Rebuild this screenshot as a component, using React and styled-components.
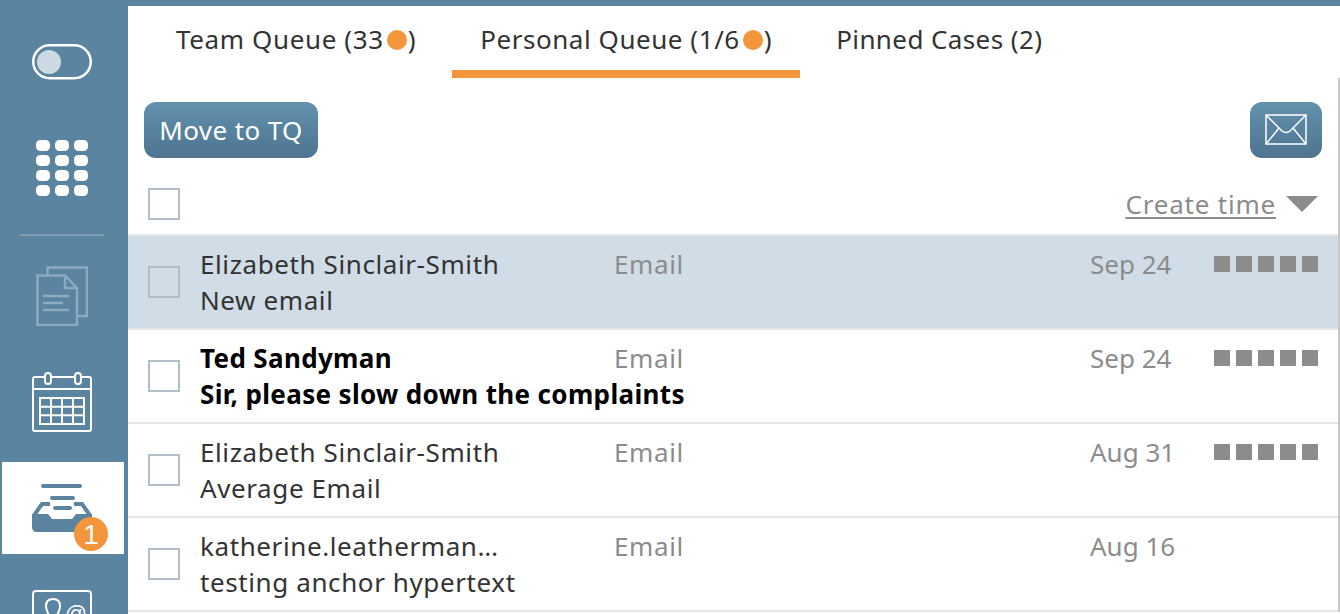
import React from 'react';
import styled, { createGlobalStyle } from 'styled-components';

const GlobalStyle = createGlobalStyle`
  html, body {
    margin: 0;
    height: 100%;
    overflow: hidden;
    background: #fff;
  }
  body {
    font-family: "Noto Sans", "Open Sans", sans-serif;
    font-variant-ligatures: none;
  }
`;

const Page = styled.div`
  display: flex;
  flex-direction: column;
  height: 614px;
  overflow: hidden;
`;

const TopBar = styled.div`
  height: 6px;
  flex: none;
  background: #5a84a0;
`;

const Body = styled.div`
  display: flex;
  flex: 1;
  min-height: 0;
`;

const Sidebar = styled.nav`
  width: 128px;
  flex: none;
  background: #5a84a0;
  padding-top: 10px;
  display: flex;
  flex-direction: column;
  gap: 14px;
  overflow: hidden;
`;

const NavItem = styled.div`
  flex: none;
  height: 92px;
  margin: 0 4px 0 2px;
  padding-right: 2px;
  box-sizing: border-box;
  display: flex;
  align-items: center;
  justify-content: center;
  position: relative;
  background: ${(p) => (p.$active ? '#fff' : 'transparent')};
`;

const NavDivider = styled.div`
  flex: none;
  height: 2px;
  margin: 6px 24px 0 20px;
  background: #7c9fb6;
`;

const Badge = styled.span`
  position: absolute;
  left: 72px;
  top: 55px;
  width: 34px;
  height: 34px;
  border-radius: 50%;
  background: #f3953a;
  color: #fff;
  font-family: "Liberation Sans", sans-serif;
  font-size: 28px;
  line-height: 35px;
  text-align: center;
`;

const Main = styled.main`
  flex: 1;
  min-width: 0;
`;

const Tabs = styled.div`
  display: flex;
  gap: 8px;
  padding-left: 20px;
  height: 72px;
`;

const Tab = styled.div`
  display: flex;
  align-items: center;
  padding: 6px 28px 4px;
  height: 72px;
  box-sizing: border-box;
  font-size: 26px;
  letter-spacing: ${(p) => p.$spacing};
  color: #333;
  white-space: nowrap;
  border-bottom: 8px solid ${(p) => (p.$active ? '#f3953a' : 'transparent')};
`;

const Dot = styled.span`
  display: inline-block;
  width: 20px;
  height: 20px;
  margin: 2px 1px 0 3px;
  border-radius: 50%;
  background: #f3953a;
`;

const QueuePanel = styled.div`
  border-right: 2px solid #c8c8c8;
`;

const Toolbar = styled.div`
  display: flex;
  justify-content: space-between;
  padding: 24px 16px 0;
`;

const ActionButton = styled.button`
  height: 56px;
  width: ${(p) => (p.$icon ? '72px' : '174px')};
  padding: 0;
  border: 0;
  border-radius: 12px;
  background: linear-gradient(#6291ae, #4e7490);
  color: #fff;
  font: inherit;
  font-size: 26px;
  letter-spacing: 0.4px;
  display: flex;
  align-items: center;
  justify-content: center;
`;

const ListHeader = styled.div`
  display: flex;
  justify-content: space-between;
  height: 46px;
  margin-top: 30px;
  padding: 0 20px;
  border-bottom: 2px solid #e6e6e6;
`;

const Checkbox = styled.span`
  display: block;
  flex: none;
  width: 32px;
  height: 32px;
  box-sizing: border-box;
  border: 2px solid #b0bec5;
`;

const Sort = styled.div`
  display: flex;
  align-items: center;
  gap: 10px;
  height: 32px;
`;

const SortLabel = styled.span`
  font-size: 26px;
  letter-spacing: 0.8px;
  color: #8c8c8c;
  text-decoration: underline;
  text-underline-offset: 3px;
  text-decoration-thickness: 2px;
`;

const SortArrow = styled.span`
  width: 0;
  height: 0;
  border-left: 16px solid transparent;
  border-right: 16px solid transparent;
  border-top: 16px solid #8c8c8c;
`;

const Row = styled.div`
  display: grid;
  grid-template-columns: 32px 434px 476px 124px 104px;
  height: 92px;
  padding-left: 20px;
  border-bottom: 2px solid #e6e6e6;
  background: ${(p) => (p.$selected ? '#d0dde6' : '#fff')};
`;

const CheckCell = styled.div`
  padding-top: 30px;
`;

const NameCell = styled.div`
  padding: 10px 0 0 20px;
  font-size: 26px;
  line-height: 36px;
  letter-spacing: ${(p) => (p.$unread ? '0.35px' : '0.6px')};
  color: ${(p) => (p.$unread ? '#000' : '#333')};
  font-weight: ${(p) => (p.$unread ? 700 : 400)};
  white-space: nowrap;
`;

const GrayCell = styled.div`
  padding-top: 10px;
  font-size: 26px;
  line-height: 36px;
  letter-spacing: ${(p) => p.$spacing || 0};
  color: #8c8c8c;
`;

const Squares = styled.div`
  display: flex;
  gap: 6px;
  padding-top: 20px;
`;

const Square = styled.span`
  width: 16px;
  height: 16px;
  background: #8c8c8c;
`;

const ToggleIcon = () => (
  <svg width="60" height="36" viewBox="0 0 60 36">
    <rect x="1.25" y="1.25" width="57.5" height="33" rx="16.5" fill="none" stroke="#fff" strokeWidth="2.5" />
    <circle cx="17" cy="18" r="12" fill="#ccd9e2" />
  </svg>
);

const GridIcon = () => (
  <svg width="52" height="56" viewBox="0 0 52 56" fill="#fff">
    {[0, 15, 30, 45].map((y) =>
      [0, 19, 38].map((x) => <rect key={`${x}-${y}`} x={x} y={y} width="14" height="11" rx="4.5" />)
    )}
  </svg>
);

const DocsIcon = () => (
  <svg width="52" height="60" viewBox="0 0 52 60" fill="none" stroke="#8dabbf" strokeWidth="2.5">
    <path d="M11.5 9V1.5H51V50H42" />
    <path d="M1.5 9.5H29L41 22V59H1.5z" />
    <path d="M29 10V22H41" />
    <path d="M7 30H33M7 37H27M7 44H33" />
  </svg>
);

const CalendarIcon = () => (
  <svg width="60" height="60" viewBox="0 0 60 60" fill="none" stroke="#fff" strokeWidth="2">
    <rect x="1" y="5" width="58" height="54" rx="2" />
    <path d="M1 17H59" />
    <rect x="13" y="1" width="6" height="11" rx="3" fill="#5a84a0" />
    <rect x="43" y="1" width="6" height="11" rx="3" fill="#5a84a0" />
    <rect x="8" y="26" width="44" height="26" />
    <path d="M19 26V52M30 26V52M41 26V52M8 34.7H52M8 43.3H52" />
  </svg>
);

const InboxIcon = () => (
  <svg width="60" height="50" viewBox="0 0 60 50" fill="#5a84a0">
    <rect x="9" y="1" width="41" height="4" rx="2" />
    <rect x="18" y="13" width="25" height="4" rx="2" />
    <rect x="21" y="23" width="19" height="4" rx="2" />
    <path d="M18 21H10L1.500 33" fill="none" stroke="#5a84a0" strokeWidth="4" />
    <path d="M42 21H50L58.500 33" fill="none" stroke="#5a84a0" strokeWidth="4" />
    <path d="M0 31H16L20 36H40L44 31H60V44Q60 49 55 49H5Q0 49 0 44z" />
  </svg>
);

const ContactIcon = () => (
  <svg width="60" height="48" viewBox="0 0 60 48" fill="none" stroke="#fff" strokeWidth="2">
    <rect x="1" y="1" width="58" height="46" rx="3" />
    <path d="M17 28C17 23 14 21 14 16C14 11 17 9 21 9C25 9 28 11 28 16C28 21 25 23 25 28" />
    <text x="44" y="31" textAnchor="middle" fill="#fff" stroke="none" fontFamily="Liberation Sans, sans-serif" fontSize="22">@</text>
  </svg>
);

const MailIcon = () => (
  <svg width="42" height="32" viewBox="0 0 42 32" fill="none" stroke="#fff" strokeWidth="1.5">
    <rect x="1" y="1" width="40" height="29" />
    <path d="M1 1L17 17C19.500 19 22.500 19 25 17L41 1M1 30L14 14M41 30L28 14" />
  </svg>
);

const rows = [
  { name: 'Elizabeth Sinclair-Smith', subject: 'New email', date: 'Sep 24', selected: true, squares: true },
  { name: 'Ted Sandyman', subject: 'Sir, please slow down the complaints', date: 'Sep 24', unread: true, squares: true },
  { name: 'Elizabeth Sinclair-Smith', subject: 'Average Email', date: 'Aug 31', squares: true },
  { name: 'katherine.leatherman…', subject: 'testing anchor hypertext', date: 'Aug 16' },
];

const App = () => (
  <Page>
    <GlobalStyle />
    <TopBar />
    <Body>
      <Sidebar>
        <NavItem><ToggleIcon /></NavItem>
        <NavItem><GridIcon /></NavItem>
        <NavDivider />
        <NavItem><DocsIcon /></NavItem>
        <NavItem><CalendarIcon /></NavItem>
        <NavItem $active>
          <InboxIcon />
          <Badge>1</Badge>
        </NavItem>
        <NavItem><ContactIcon /></NavItem>
      </Sidebar>
      <Main>
        <Tabs>
          <Tab $spacing="0.62px">Team Queue (33<Dot />)</Tab>
          <Tab $active $spacing="0.55px">Personal Queue (1/6<Dot />)</Tab>
          <Tab $spacing="0.4px">Pinned Cases (2)</Tab>
        </Tabs>
        <QueuePanel>
          <Toolbar>
            <ActionButton>Move to TQ</ActionButton>
            <ActionButton $icon aria-label="Email"><MailIcon /></ActionButton>
          </Toolbar>
          <ListHeader>
            <Checkbox />
            <Sort>
              <SortLabel>Create time</SortLabel>
              <SortArrow />
            </Sort>
          </ListHeader>
          {rows.map((row, index) => (
            <Row key={index} $selected={row.selected}>
              <CheckCell><Checkbox /></CheckCell>
              <NameCell $unread={row.unread}>
                {row.name}
                <br />
                {row.subject}
              </NameCell>
              <GrayCell $spacing="0.6px">Email</GrayCell>
              <GrayCell>{row.date}</GrayCell>
              {row.squares ? (
                <Squares>
                  {[0, 1, 2, 3, 4].map((i) => <Square key={i} />)}
                </Squares>
              ) : <div />}
            </Row>
          ))}
        </QueuePanel>
      </Main>
    </Body>
  </Page>
);

export default App;
